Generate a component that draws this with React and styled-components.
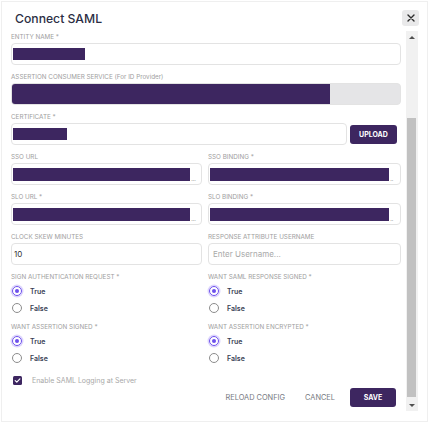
import React from 'react';
import styled, { createGlobalStyle } from 'styled-components';

const PURPLE = '#3d2660';

const Global = createGlobalStyle`
  html, body { margin: 0; padding: 0; background: #fff; }
  body { font-family: Inter, "Noto Sans", sans-serif; }
  * { box-sizing: border-box; }
`;

const Dialog = styled.div`
  margin: 1px;
  width: 427px;
  height: 421px;
  border: 1px solid #efefef;
  display: flex;
  flex-direction: column;
  background: #fff;
`;

const Header = styled.div`
  height: 29px;
  flex: none;
  display: flex;
  justify-content: space-between;
  align-items: flex-start;
  padding: 0 8px 0 13px;
`;

const Title = styled.h1`
  margin: 9px 0 0;
  font-size: 12.2px;
  line-height: 16px;
  font-weight: 500;
  color: #2b2e44;
`;

const CloseButton = styled.button`
  margin-top: 8px;
  width: 17px;
  height: 16px;
  border: none;
  border-radius: 3px;
  background: #e9e9ea;
  padding: 0;
  display: flex;
  align-items: center;
  justify-content: center;
`;

const Body = styled.div`
  height: 380px;
  flex: none;
  display: flex;
  padding-left: 9px;
`;

const Content = styled.div`
  width: 390px;
  padding-top: 2px;
  display: flex;
  flex-direction: column;
  gap: 8px;
`;

const Scrollbar = styled.div`
  margin-left: 5px;
  width: 12px;
  height: 100%;
  background: #f1f1f1;
  display: flex;
  flex-direction: column;
`;

const ScrollArrow = styled.div`
  height: 12px;
  flex: none;
  display: flex;
  align-items: center;
  justify-content: center;
  &::after {
    content: '';
    width: 0;
    height: 0;
    border-left: 3px solid transparent;
    border-right: 3px solid transparent;
    ${p => (p.$down ? 'border-top: 3px solid #505050;' : 'border-bottom: 3px solid #505050;')}
  }
`;

const ScrollSpacer = styled.div`
  height: 75px;
  flex: none;
`;

const ScrollThumb = styled.div`
  height: 279px;
  flex: none;
  margin: 0 2px 2px 1px;
  background: #c1c1c1;
`;

const Field = styled.div`
  display: flex;
  flex-direction: column;
  min-width: 0;
`;

const Label = styled.div`
  font-size: 6.3px;
  line-height: 8px;
  height: 8px;
  margin-bottom: 2px;
  color: #9e9e9e;
  text-transform: ${p => (p.$keepCase ? 'none' : 'uppercase')};
  white-space: nowrap;
`;

const InputBox = styled.div`
  height: 22px;
  border: 1px solid #e3e3e3;
  border-radius: 4px;
  display: flex;
  align-items: ${p => (p.$disabled ? 'stretch' : 'center')};
  padding: ${p => (p.$disabled ? '0' : '0 1px')};
  background: ${p => (p.$disabled ? '#e5e5e7' : '#fff')};
  flex: ${p => (p.$grow ? '1 1 0' : 'none')};
  min-width: 0;
  overflow: hidden;
`;

const Redacted = styled.span`
  display: block;
  background: ${PURPLE};
  height: ${p => (p.$full ? 'auto' : `${p.$h || 12}px`)};
  width: ${p => (p.$grow ? 'auto' : `${p.$w}px`)};
  flex: ${p => (p.$grow ? '1' : 'none')};
`;

const Ellipsis = styled.span`
  width: 10px;
  align-self: flex-end;
  font-size: 7px;
  line-height: 10px;
  color: #b0b0b0;
  padding-left: 1px;
  letter-spacing: -0.5px;
`;

const Value = styled.span`
  font-size: 8px;
  color: ${p => (p.$placeholder ? '#a9a9a9' : '#333')};
  padding-left: ${p => (p.$placeholder ? '3px' : '1px')};
`;

const Row = styled.div`
  display: flex;
  align-items: center;
  gap: 3px;
  padding-right: 4px;
`;

const Columns = styled.div`
  display: grid;
  grid-template-columns: 191px 193px;
  column-gap: 6px;
`;

const PrimaryButton = styled.button`
  height: 19px;
  width: ${p => p.$w}px;
  border: none;
  border-radius: 3px;
  background: ${PURPLE};
  color: #fff;
  font-family: Inter, "Noto Sans", sans-serif;
  font-size: 7px;
  font-weight: 700;
  padding: 0;
  flex: none;
  margin-left: ${p => p.$ml || 0}px;
`;

const TextButton = styled.button`
  height: 19px;
  border: none;
  background: transparent;
  color: #777a82;
  font-family: Inter, "Noto Sans", sans-serif;
  font-size: 7.4px;
  padding: 0 ${p => p.$px}px;
`;

const RadioList = styled.div`
  display: flex;
  flex-direction: column;
  gap: 3px;
  margin-top: 1px;
`;

const RadioRow = styled.label`
  height: 14px;
  display: flex;
  align-items: center;
  gap: 8px;
  padding-left: 1px;
  font-size: 7px;
  font-weight: 600;
  color: #3a3f55;
`;

const RadioCircle = styled.span`
  width: 10px;
  height: 10px;
  border-radius: 50%;
  flex: none;
  border: ${p => (p.$checked ? `1.5px solid #6d50ec` : '1px solid #8c8c8c')};
  box-shadow: ${p => (p.$checked ? '0 0 0 1.5px #ddd5fd' : 'none')};
  display: flex;
  align-items: center;
  justify-content: center;
  &::after {
    content: '';
    width: 4px;
    height: 4px;
    border-radius: 50%;
    background: ${p => (p.$checked ? '#6d50ec' : 'transparent')};
  }
`;

const Footer = styled.div`
  display: flex;
  flex-direction: column;
  gap: 1px;
`;

const CheckRow = styled.label`
  height: 14px;
  display: flex;
  align-items: center;
  gap: 10px;
  padding-left: 2px;
  font-size: 7px;
  color: #a8a8a8;
`;

const CheckBox = styled.span`
  width: 9px;
  height: 9px;
  border-radius: 1.5px;
  background: ${PURPLE};
  display: flex;
  align-items: center;
  justify-content: center;
`;

const Actions = styled.div`
  display: flex;
  justify-content: flex-end;
  align-items: center;
  padding-right: 5px;
  gap: 5px;
`;

const TextField = ({ label, children, disabled }) => (
  <Field>
    <Label>{label}</Label>
    <InputBox $disabled={disabled}>{children}</InputBox>
  </Field>
);

const RadioGroup = ({ label, value }) => (
  <Field>
    <Label>{label}</Label>
    <RadioList>
      <RadioRow>
        <RadioCircle $checked={value === true} />
        True
      </RadioRow>
      <RadioRow>
        <RadioCircle $checked={value === false} />
        False
      </RadioRow>
    </RadioList>
  </Field>
);

export default function App() {
  return (
    <>
      <Global />
      <Dialog>
        <Header>
          <Title>Connect SAML</Title>
          <CloseButton aria-label="close">
            <svg width="8" height="8" viewBox="0 0 8 8">
              <path d="M1 1L7 7M7 1L1 7" stroke="#2d2d2d" strokeWidth="1.4" strokeLinecap="round" />
            </svg>
          </CloseButton>
        </Header>
        <Body>
          <Content>
            <TextField label="Entity Name *">
              <Redacted $w={72} $h={12} />
            </TextField>
            <Field>
              <Label $keepCase>ASSERTION CONSUMER SERVICE (For ID Provider)</Label>
              <InputBox $disabled>
                <Redacted $w={318} $full />
              </InputBox>
            </Field>
            <Field>
              <Label>Certificate *</Label>
              <Row>
                <InputBox $grow>
                  <Redacted $w={54} $h={12} />
                </InputBox>
                <PrimaryButton $w={47}>UPLOAD</PrimaryButton>
              </Row>
            </Field>
            <Columns>
              <TextField label="SSO URL">
                <Redacted $grow $h={13} />
                <Ellipsis>...</Ellipsis>
              </TextField>
              <TextField label="SSO Binding *">
                <Redacted $grow $h={13} />
                <Ellipsis>..</Ellipsis>
              </TextField>
            </Columns>
            <Columns>
              <TextField label="SLO URL *">
                <Redacted $grow $h={13} />
                <Ellipsis>...</Ellipsis>
              </TextField>
              <TextField label="SLO Binding *">
                <Redacted $grow $h={13} />
                <Ellipsis>..</Ellipsis>
              </TextField>
            </Columns>
            <Columns>
              <TextField label="Clock Skew Minutes">
                <Value>10</Value>
              </TextField>
              <TextField label="Response Attribute Username">
                <Value $placeholder>Enter Username...</Value>
              </TextField>
            </Columns>
            <Columns>
              <RadioGroup label="Sign Authentication Request *" value={true} />
              <RadioGroup label="Want SAML Response Signed *" value={true} />
            </Columns>
            <Columns>
              <RadioGroup label="Want Assertion Signed *" value={true} />
              <RadioGroup label="Want Assertion Encrypted *" value={true} />
            </Columns>
            <Footer>
              <CheckRow>
                <CheckBox>
                  <svg width="7" height="7" viewBox="0 0 7 7">
                    <path d="M1.2 3.6L2.8 5.1L5.9 1.9" fill="none" stroke="#fff" strokeWidth="1.2" strokeLinecap="round" strokeLinejoin="round" />
                  </svg>
                </CheckBox>
                Enable SAML Logging at Server
              </CheckRow>
              <Actions>
                <TextButton $px={8}>RELOAD CONFIG</TextButton>
                <TextButton $px={7}>CANCEL</TextButton>
                <PrimaryButton $w={46} $ml={3}>SAVE</PrimaryButton>
              </Actions>
            </Footer>
          </Content>
          <Scrollbar>
            <ScrollArrow />
            <ScrollSpacer />
            <ScrollThumb />
            <ScrollArrow $down />
          </Scrollbar>
        </Body>
      </Dialog>
    </>
  );
}
